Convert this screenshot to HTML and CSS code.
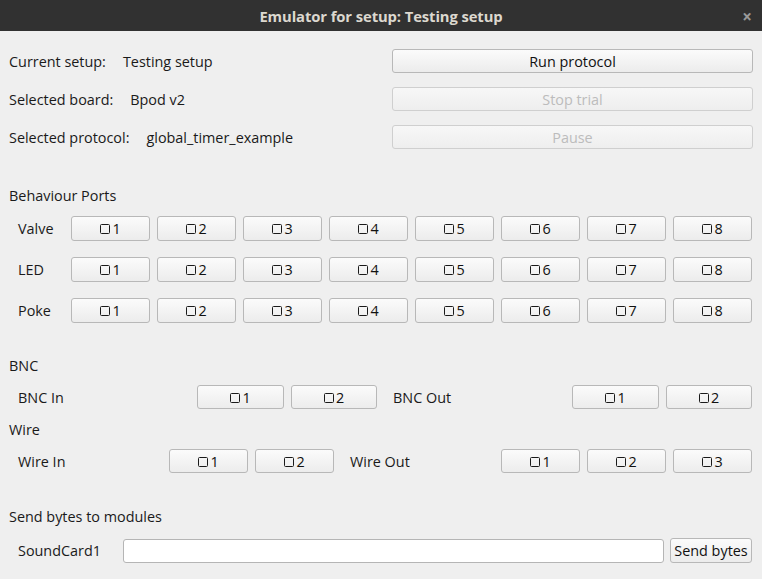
FILE: index.html
```html
<!DOCTYPE html>
<html>
<head>
<meta charset="utf-8">
<link rel="stylesheet" href="styles.css">
</head>
<body>
<div class="window">
  <div class="titlebar">
    <span class="title">Emulator for setup: Testing setup</span>
    <span class="close">×</span>
  </div>
  <div class="content">
    <div class="top">
      <div class="info"><span class="lbl">Current setup:</span><span class="val">Testing setup</span></div>
      <button class="btn big">Run protocol</button>
      <div class="info"><span class="lbl">Selected board:</span><span class="val">Bpod v2</span></div>
      <button class="btn big" disabled>Stop trial</button>
      <div class="info"><span class="lbl">Selected protocol:</span><span class="val">global_timer_example</span></div>
      <button class="btn big" disabled>Pause</button>
    </div>

    <div class="section s-ports">Behaviour Ports</div>
    <div class="ports">
      <div class="prow">
        <span class="rlabel plabel">Valve</span>
        <button class="btn pbtn"><i class="cb"></i>1</button>
        <button class="btn pbtn"><i class="cb"></i>2</button>
        <button class="btn pbtn"><i class="cb"></i>3</button>
        <button class="btn pbtn"><i class="cb"></i>4</button>
        <button class="btn pbtn"><i class="cb"></i>5</button>
        <button class="btn pbtn"><i class="cb"></i>6</button>
        <button class="btn pbtn"><i class="cb"></i>7</button>
        <button class="btn pbtn"><i class="cb"></i>8</button>
      </div>
      <div class="prow">
        <span class="rlabel plabel">LED</span>
        <button class="btn pbtn"><i class="cb"></i>1</button>
        <button class="btn pbtn"><i class="cb"></i>2</button>
        <button class="btn pbtn"><i class="cb"></i>3</button>
        <button class="btn pbtn"><i class="cb"></i>4</button>
        <button class="btn pbtn"><i class="cb"></i>5</button>
        <button class="btn pbtn"><i class="cb"></i>6</button>
        <button class="btn pbtn"><i class="cb"></i>7</button>
        <button class="btn pbtn"><i class="cb"></i>8</button>
      </div>
      <div class="prow">
        <span class="rlabel plabel">Poke</span>
        <button class="btn pbtn"><i class="cb"></i>1</button>
        <button class="btn pbtn"><i class="cb"></i>2</button>
        <button class="btn pbtn"><i class="cb"></i>3</button>
        <button class="btn pbtn"><i class="cb"></i>4</button>
        <button class="btn pbtn"><i class="cb"></i>5</button>
        <button class="btn pbtn"><i class="cb"></i>6</button>
        <button class="btn pbtn"><i class="cb"></i>7</button>
        <button class="btn pbtn"><i class="cb"></i>8</button>
      </div>
    </div>

    <div class="section s-bnc">BNC</div>
    <div class="io-row">
      <span class="rlabel bnc-in">BNC In</span>
      <button class="btn wbtn"><i class="cb"></i>1</button>
      <button class="btn wbtn2"><i class="cb"></i>2</button>
      <span class="rlabel bnc-out">BNC Out</span>
      <button class="btn wbtn"><i class="cb"></i>1</button>
      <button class="btn wbtn2"><i class="cb"></i>2</button>
    </div>

    <div class="section s-wire">Wire</div>
    <div class="io-row">
      <span class="rlabel wire-in">Wire In</span>
      <button class="btn pbtn"><i class="cb"></i>1</button>
      <button class="btn pbtn"><i class="cb"></i>2</button>
      <span class="rlabel wire-out">Wire Out</span>
      <button class="btn pbtn"><i class="cb"></i>1</button>
      <button class="btn pbtn"><i class="cb"></i>2</button>
      <button class="btn pbtn"><i class="cb"></i>3</button>
    </div>

    <div class="section s-send">Send bytes to modules</div>
    <div class="send-row">
      <span class="rlabel send-label">SoundCard1</span>
      <input class="bytes-input" type="text">
      <button class="btn send-btn">Send bytes</button>
    </div>
  </div>
</div>
</body>
</html>
```

FILE: styles.css
```css
* { box-sizing: border-box; }
html, body {
  margin: 0;
  padding: 0;
  background: #efefef;
}
body {
  font-family: "Open Sans", "Noto Sans", "DejaVu Sans", sans-serif;
  font-size: 14.4px;
  color: #1a1a1a;
  width: 762px;
  height: 579px;
  overflow: hidden;
}
.titlebar {
  height: 31px;
  background: #313131;
  display: flex;
  align-items: center;
  justify-content: center;
  position: relative;
}
.title {
  color: #dcd8cf;
  font-weight: bold;
  font-size: 14.8px;
  letter-spacing: -0.1px;
}
.close {
  position: absolute;
  right: 10px;
  top: 5px;
  color: #9a9a9a;
  font-size: 17px;
  font-weight: bold;
}
.content {
  padding: 18px 10px 0 9px;
}
.top {
  display: grid;
  grid-template-columns: 383px 361px;
  row-gap: 14px;
}
.info {
  display: flex;
  align-items: center;
  height: 24px;
}
.lbl { margin-right: 17px; }
.btn {
  font-family: inherit;
  font-size: 14.4px;
  color: #111;
  background: linear-gradient(#fbfbfb, #ececec);
  border: 1px solid #b8b8b8;
  border-radius: 3px;
  padding: 0;
  margin: 0;
  height: 25px;
  display: flex;
  align-items: center;
  justify-content: center;
  flex-shrink: 0;
}
.btn.big { height: 24px; }
.btn[disabled] {
  color: #bcbcbc;
  border-color: #cfcfcf;
  background: linear-gradient(#f7f7f7, #eeeeee);
}
.section {
  height: 18px;
  line-height: 18px;
}
.s-ports { margin-top: 38px; }
.s-bnc { margin-top: 34px; }
.s-wire { margin-top: 12px; }
.s-send { margin-top: 35px; }
.ports {
  margin-top: 11px;
  display: flex;
  flex-direction: column;
  gap: 16px;
}
.prow, .io-row, .send-row {
  display: flex;
  align-items: center;
  gap: 7px;
}
.io-row { margin-top: 10px; }
.io-row .btn { height: 24px; }
.rlabel { padding-left: 9px; flex-shrink: 0; }
.plabel { width: 55px; }
.pbtn { width: 79px; }
.wbtn { width: 87px; }
.wbtn2 { width: 86px; }
.bnc-in { width: 181px; }
.bnc-out { width: 181px; }
.wire-in { width: 153px; }
.wire-out { width: 153px; }
.cb {
  display: inline-block;
  width: 10px;
  height: 10px;
  border: 1.7px solid #1a1a1a;
  border-radius: 1.5px;
  margin-right: 2px;
  margin-top: 1px;
}
.send-row { margin-top: 12px; }
.send-label { width: 107px; }
.bytes-input {
  width: 541px;
  height: 24px;
  background: #fff;
  border: 1px solid #b5b5b5;
  border-radius: 3px;
  margin: 0;
  flex-shrink: 0;
}
.send-btn {
  width: 82px;
  height: 25px;
  margin-left: -1px;
}
```
